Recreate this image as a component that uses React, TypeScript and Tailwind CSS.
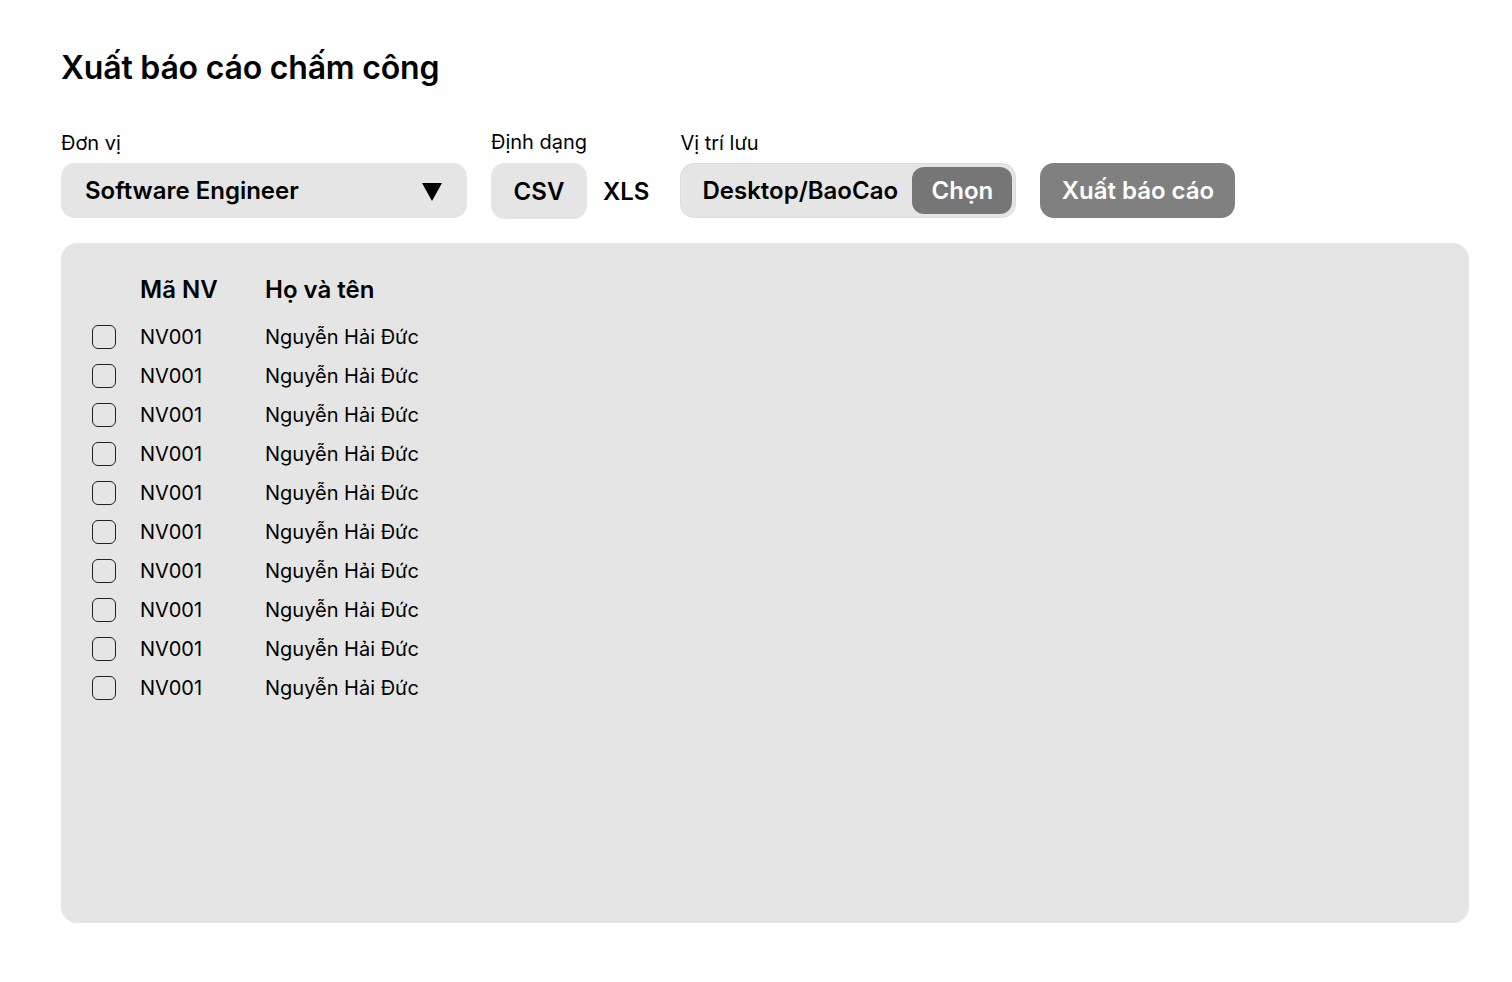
const rows = Array.from({ length: 10 }, (_, i) => ({
  id: i,
  code: "NV001",
  name: "Nguyễn Hải Đức",
}));

export default function App() {
  return (
    <div
      className="min-h-[982px] w-full bg-white text-black"
      style={{ fontFamily: "Inter, 'Noto Sans', sans-serif" }}
    >
      <div className="pl-[61px] pr-[43px] pt-[48px]">
        <h1 className="text-[32px] font-semibold leading-[40px] tracking-[-0.2px]">
          Xuất báo cáo chấm công
        </h1>

        <div className="mt-[42px] flex items-end">
          <div className="flex flex-col">
            <span className="text-[20px] leading-[24px] mb-[8px]">Đơn vị</span>
            <div className="flex h-[55px] w-[406px] items-center justify-between rounded-[14px] bg-[#e5e5e5] pl-[24px] pr-[25px]">
              <span className="text-[24px] font-semibold leading-none">
                Software Engineer
              </span>
              <svg width="20" height="18" viewBox="0 0 20 18" className="mt-[2px]">
                <polygon points="0,0 20,0 10,18" fill="#000" />
              </svg>
            </div>
          </div>

          <div className="ml-[24px] -mb-[1px] flex flex-col">
            <span className="text-[20px] leading-[24px] mb-[9px]">Định dạng</span>
            <div className="flex items-center">
              <div className="flex h-[56px] w-[96px] items-center justify-center rounded-[14px] bg-[#e5e5e5] pt-[2px] text-[24px] font-semibold">
                CSV
              </div>
              <span className="ml-[16px] pt-[2px] text-[24px] font-semibold">XLS</span>
            </div>
          </div>

          <div className="ml-[31px] flex flex-col">
            <span className="text-[20px] leading-[24px] mb-[8px]">Vị trí lưu</span>
            <div className="flex h-[55px] w-[336px] items-center justify-between rounded-[14px] border border-[#dcdcdc] bg-[#e5e5e5] pl-[21px] pr-[3px]">
              <span className="text-[24px] font-semibold">Desktop/BaoCao</span>
              <button className="flex h-[47px] w-[100px] items-center justify-center rounded-[12px] bg-[#767676] text-[24px] font-semibold text-white">
                Chọn
              </button>
            </div>
          </div>

          <button className="ml-[24px] flex h-[55px] w-[195px] items-center justify-center rounded-[14px] bg-[#808080] text-[24px] font-semibold text-white">
            Xuất báo cáo
          </button>
        </div>

        <div className="mt-[25px] h-[680px] w-[1408px] rounded-[16px] bg-[#e5e5e5] pl-[31px] pt-[32px]">
          <div className="flex h-[30px] items-center text-[24px] font-semibold">
            <span className="ml-[48px] w-[125px]">Mã NV</span>
            <span>Họ và tên</span>
          </div>
          <div className="mt-[12px] flex flex-col">
            {rows.map((r) => (
              <div key={r.id} className="flex h-[39px] items-center text-[20px]">
                <span className="h-[24px] w-[24px] rounded-[6px] border border-[#222]" />
                <span className="ml-[24px] w-[125px]">{r.code}</span>
                <span>{r.name}</span>
              </div>
            ))}
          </div>
        </div>
      </div>
    </div>
  );
}
